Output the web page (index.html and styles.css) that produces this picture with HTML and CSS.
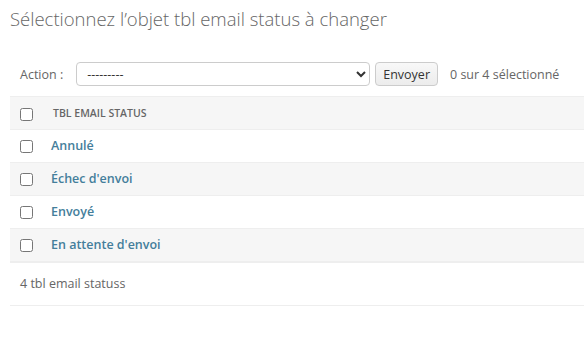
FILE: index.html
```html
<!DOCTYPE html>
<html lang="fr">
<head>
    <meta charset="UTF-8">
    <meta name="viewport" content="width=device-width, initial-scale=1.0">
    <title>Sélectionnez l’objet tbl email status à changer</title>
    <link rel="stylesheet" href="styles.css">
</head>
<body>
    <div class="content">
        <h1>Sélectionnez l’objet tbl email status à changer</h1>

        <form id="changelist-form">
            <div class="actions">
                <label>Action :</label>
                <select name="action">
                    <option value="">---------</option>
                    <option value="delete_selected">Supprimer les objets tbl email status sélectionnés</option>
                </select>
                <button type="submit" class="button">Envoyer</button>
                <span class="action-counter">0 sur 4 sélectionné</span>
            </div>

            <table class="result-list">
                <thead>
                    <tr>
                        <th class="action-checkbox"><input type="checkbox"></th>
                        <th class="col-name">tbl email status</th>
                    </tr>
                </thead>
                <tbody>
                    <tr>
                        <td class="action-checkbox"><input type="checkbox"></td>
                        <th><a href="#">Annulé</a></th>
                    </tr>
                    <tr>
                        <td class="action-checkbox"><input type="checkbox"></td>
                        <th><a href="#">Échec d'envoi</a></th>
                    </tr>
                    <tr>
                        <td class="action-checkbox"><input type="checkbox"></td>
                        <th><a href="#">Envoyé</a></th>
                    </tr>
                    <tr>
                        <td class="action-checkbox"><input type="checkbox"></td>
                        <th><a href="#">En attente d'envoi</a></th>
                    </tr>
                </tbody>
            </table>

            <p class="paginator">4 tbl email statuss</p>
        </form>
    </div>
</body>
</html>
```

FILE: styles.css
```css
body { margin: 0; font-family: "Open Sans", "Noto Sans", sans-serif; font-size: 12.5px; color: #333; background: #fff; }
.content { padding: 7px 0 0 10px; }
h1 { margin: 0 0 23px; font-size: 18.5px; font-weight: 300; color: #666; line-height: 24px; }

.actions { display: flex; align-items: center; padding: 8px 0 8px 10px; height: 24px; }
.actions label { color: #666; margin-right: 13px; }
.actions select { width: 294px; height: 24px; border: 1px solid #ccc; border-radius: 4px; font-family: inherit; font-size: 12.5px; color: #333; background: #fff; padding: 0 6px; }
.button { height: 24px; margin-left: 5px; padding: 0 7px; border: 1px solid #ccc; border-radius: 4px; background: linear-gradient(#f8f8f8, #ececec); font-family: inherit; font-size: 12.5px; color: #333; }
.action-counter { margin-left: 12px; color: #666; }

.result-list { width: 100%; border-collapse: collapse; margin-top: 2px; }
.result-list th, .result-list td { text-align: left; padding: 8px 10px; line-height: 16px; border-top: 1px solid #eee; }
.result-list thead th { background: #f6f6f6; font-size: 10.5px; font-weight: 600; text-transform: uppercase; color: #666; }
.result-list thead th.col-name { padding-left: 12px; }
.result-list tbody tr:nth-child(even) { background: #f6f6f6; }
.result-list tbody tr:last-child th, .result-list tbody tr:last-child td { border-bottom: 2px solid #eee; }
.result-list tbody th { font-weight: 600; }
.result-list .action-checkbox { width: 13px; padding-right: 8px; }
.action-checkbox input { margin: 0; vertical-align: middle; width: 13px; height: 13px; }
.result-list a { color: #447e9b; text-decoration: none; }

.paginator { margin: 0; padding: 10px; line-height: 22px; color: #666; border-bottom: 1px solid #eee; }
```
